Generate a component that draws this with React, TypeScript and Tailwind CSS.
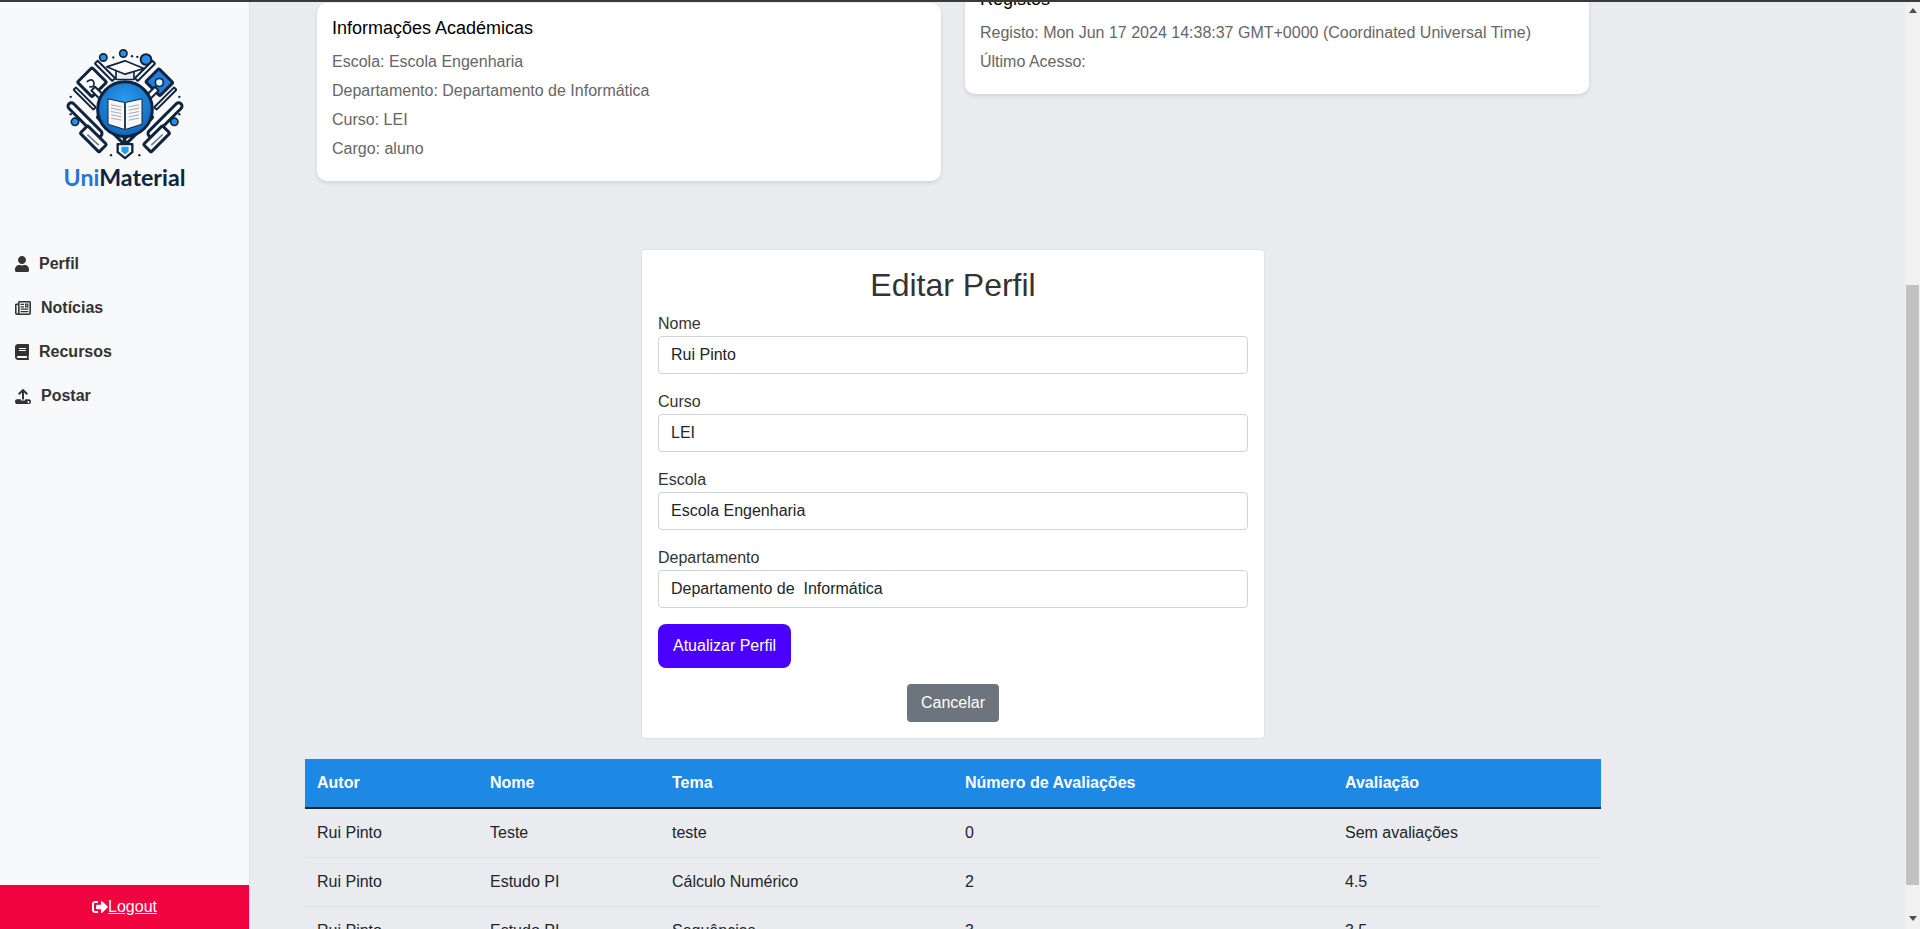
import { FaBook, FaSignOutAlt, FaUser } from "react-icons/fa";
import type { ReactNode } from "react";

const UploadIcon = () => (
  <svg viewBox="0 0 16 16" className="w-4 h-4" fill="currentColor">
    <path d="M8 0.8 L13 5.6 L11.6 7 L9 4.6 V11.5 H7 V4.6 L4.4 7 L3 5.6 Z" />
    <path
      fillRule="evenodd"
      d="M2 11.2 H6 V12.6 H10 V11.2 H14 C15.2 11.2 16 12.2 16 13.4 C16 14.8 15.1 16 14 16 H2 C0.9 16 0 14.8 0 13.4 C0 12.2 0.8 11.2 2 11.2 Z M13.4 12.9 a1 1 0 1 0 0.01 0 Z"
    />
  </svg>
);

const NewspaperIcon = () => (
  <svg viewBox="0 0 16 16" className="w-4 h-4" fill="currentColor">
    <path
      fillRule="evenodd"
      d="M4.5 1 H14.5 C15.4 1 16 1.6 16 2.5 V13 C16 14.1 15.1 15 14 15 H2 C0.9 15 0 14.1 0 13 V5 C0 4.2 0.6 3.5 1.5 3.5 H3 V2.5 C3 1.6 3.6 1 4.5 1 Z M4.6 2.6 V13 C4.6 13.2 4.6 13.3 4.5 13.4 H14 C14.2 13.4 14.4 13.2 14.4 13 V2.6 Z M1.6 5.1 V13 C1.6 13.2 1.8 13.4 2 13.4 C2.2 13.4 3 13.3 3 13 V5.1 Z"
    />
    <path
      fillRule="evenodd"
      d="M10 3.6 H13.4 V7.4 H10 Z M11.2 4.8 V6.2 H12.2 V4.8 Z M5.6 3.8 H9 V5 H5.6 Z M5.6 6.2 H9 V7.4 H5.6 Z M5.6 8.6 H13.4 V9.8 H5.6 Z M5.6 11 H13.4 V12.2 H5.6 Z"
    />
  </svg>
);

const NAV_ITEMS: { label: string; icon: ReactNode }[] = [
  { label: "Perfil", icon: <FaUser className="w-[14px] h-4" /> },
  { label: "Notícias", icon: <NewspaperIcon /> },
  { label: "Recursos", icon: <FaBook className="w-[14px] h-4" /> },
  { label: "Postar", icon: <UploadIcon /> },
];

const FIELDS = [
  { label: "Nome", value: "Rui Pinto" },
  { label: "Curso", value: "LEI" },
  { label: "Escola", value: "Escola Engenharia" },
  { label: "Departamento", value: "Departamento de  Informática" },
];

const ROWS = [
  ["Rui Pinto", "Teste", "teste", "0", "Sem avaliações"],
  ["Rui Pinto", "Estudo PI", "Cálculo Numérico", "2", "4.5"],
  ["Rui Pinto", "Estudo PI", "Sequências", "3", "3.5"],
];

const LogoEmblem = () => (
  <svg viewBox="0 0 450 380" className="w-[150px] h-[127px] blur-[0.4px]">
    <defs>
      <radialGradient id="disc" cx="50%" cy="35%" r="70%">
        <stop offset="0%" stopColor="#2a9cf0" />
        <stop offset="100%" stopColor="#0e62b8" />
      </radialGradient>
    </defs>
    <g stroke="#10243e" strokeWidth="9" fill="#fff" strokeLinejoin="round">
      {/* notebook and blue card */}
      <rect x="95" y="95" width="62" height="62" rx="4" transform="rotate(45 126 126)" />
      <path d="M110 125 Q128 112 132 128 Q134 142 118 140" fill="none" strokeWidth="5" />
      <rect x="298" y="98" width="60" height="56" rx="4" fill="#1e7fe0" transform="rotate(45 328 126)" />
      <circle cx="328" cy="127" r="12" fill="#dff0ff" strokeWidth="5" />
      {/* bars next to the cap */}
      <rect x="128" y="86" width="74" height="12" rx="2" transform="rotate(45 165 92)" strokeWidth="6" />
      <rect x="248" y="86" width="74" height="12" rx="2" transform="rotate(-45 285 92)" strokeWidth="6" />
      {/* pencils */}
      <rect x="62" y="170" width="84" height="10" rx="2" transform="rotate(45 104 175)" strokeWidth="6" />
      <rect x="304" y="170" width="84" height="10" rx="2" transform="rotate(-45 346 175)" strokeWidth="6" />
      <rect x="140" y="138" width="16" height="52" transform="rotate(-45 148 164)" strokeWidth="6" />
      <rect x="294" y="138" width="16" height="52" transform="rotate(45 302 164)" strokeWidth="6" />
      {/* long pens */}
      <rect x="37" y="229" width="136" height="20" rx="10" transform="rotate(45 105 239)" />
      <rect x="277" y="229" width="136" height="20" rx="10" transform="rotate(-45 345 239)" />
      {/* rulers */}
      <rect x="90" y="280" width="80" height="32" rx="3" transform="rotate(45 130 296)" />
      <rect x="280" y="280" width="80" height="32" rx="3" transform="rotate(-45 320 296)" />
      <path d="M112 283 L146 315" fill="none" strokeWidth="5" stroke="#6b7c90" />
      <path d="M338 283 L304 315" fill="none" strokeWidth="5" stroke="#6b7c90" />
      <rect x="130" y="258" width="110" height="14" rx="3" transform="rotate(45 185 265)" />
      <rect x="210" y="258" width="110" height="14" rx="3" transform="rotate(-45 265 265)" />
      {/* disc */}
      <circle cx="225" cy="207" r="82" fill="url(#disc)" strokeWidth="9" />
      {/* cap */}
      <path d="M198 88 V118 H252 V88" fill="#e9edf2" strokeWidth="5" />
      <path d="M170 80 L225 62 L282 85 L225 102 Z" strokeWidth="5" />
      {/* shield */}
      <path d="M203 312 H247 V336 L225 354 L203 336 Z" strokeWidth="7" />
      <path d="M214 320 H236 V334 L225 343 L214 334 Z" fill="#2a9cf0" stroke="none" />
    </g>
    {/* open book */}
    <path d="M174 176 L224 187 V268 L174 252 Z" fill="#f6f7f8" stroke="#10243e" strokeWidth="3" />
    <path d="M276 176 L226 187 V268 L276 252 Z" fill="#f6f7f8" stroke="#10243e" strokeWidth="3" />
    <path
      d="M183 194 L214 200 M183 204 L214 210 M183 214 L214 220 M183 224 L214 230 M183 234 L214 240 M267 194 L236 200 M267 204 L236 210 M267 214 L236 220 M267 224 L236 230 M267 234 L236 240"
      stroke="#a4abb3"
      strokeWidth="3"
    />
    {/* satellites */}
    <g stroke="#10243e" fill="#2a8fe6">
      <circle cx="160" cy="52" r="11" strokeWidth="5" />
      <circle cx="220" cy="40" r="11" strokeWidth="5" />
      <circle cx="288" cy="58" r="16" strokeWidth="6" />
      <circle cx="75" cy="245" r="11" strokeWidth="5" />
      <circle cx="373" cy="245" r="11" strokeWidth="5" />
    </g>
    <g fill="#10243e">
      <circle cx="190" cy="52" r="3.5" />
      <circle cx="246" cy="48" r="3.5" />
      <circle cx="262" cy="50" r="3.5" />
      <circle cx="62" cy="170" r="3.5" />
      <circle cx="388" cy="170" r="3.5" />
      <circle cx="62" cy="222" r="3.5" />
      <circle cx="388" cy="222" r="3.5" />
      <circle cx="183" cy="345" r="3.5" />
      <circle cx="268" cy="345" r="3.5" />
    </g>
  </svg>
);

const InfoCard = ({ title, lines, className }: { title: string; lines: string[]; className?: string }) => (
  <div className={`bg-white rounded-[10px] shadow-[0_2px_4px_rgba(0,0,0,0.1)] p-[15px] ${className ?? ""}`}>
    <h3 className="text-[18px] leading-[21px] text-black mb-[11px]">{title}</h3>
    {lines.map((line) => (
      <p key={line} className="text-[#666] text-base leading-6 mb-[5px]">
        {line}
      </p>
    ))}
  </div>
);

const App = () => {
  return (
    <div className="h-screen overflow-hidden flex flex-col font-['Liberation_Sans',sans-serif] text-[#212529]">
      <div className="h-[2px] bg-[#3a3a3a] shrink-0" />
      <div className="flex-1 flex min-h-0">
        <aside className="w-[250px] shrink-0 flex flex-col bg-[#f8f9fa] border-r border-[#dee2e6]">
          <div className="pt-[38px] flex flex-col items-center">
            <LogoEmblem />
            <div className="font-['Lato',sans-serif] font-bold text-[23.2px] leading-[24px] -mt-[2px] mb-[-1px]">
              <span className="text-[#2a74d8]">Uni</span>
              <span className="text-[#10243e]">Material</span>
            </div>
          </div>
          <nav className="mt-[54px] flex flex-col">
            {NAV_ITEMS.map((item) => (
              <a key={item.label} className="h-[44px] pl-[15px] flex items-center gap-[10px] font-bold text-[#333]">
                {item.icon}
                {item.label}
              </a>
            ))}
          </nav>
          <a className="mt-auto h-[44px] bg-[#f0033f] text-white flex items-center justify-center">
            <FaSignOutAlt size={16} />
            <span className="underline">Logout</span>
          </a>
        </aside>

        <main className="flex-1 min-w-0 overflow-hidden bg-[#e9ebef] pt-px">
          <div className="w-[1296px] ml-[55px]">
            <div className="grid grid-cols-2 gap-6 px-3 items-start">
              <InfoCard
                title="Informações Académicas"
                lines={["Escola: Escola Engenharia", "Departamento: Departamento de Informática", "Curso: LEI", "Cargo: aluno"]}
                className="h-[178px]"
              />
              <InfoCard
                title="Registos"
                lines={["Registo: Mon Jun 17 2024 14:38:37 GMT+0000 (Coordinated Universal Time)", "Último Acesso:"]}
                className="-mt-[29px] h-[120px]"
              />
            </div>

            <form className="w-[624px] h-[490px] mx-auto mt-[68px] bg-white border border-[#dee2e6] rounded p-4">
              <h2 className="text-[32px] leading-[38px] text-[#333] text-center mb-2">Editar Perfil</h2>
              {FIELDS.map((field) => (
                <div key={field.label} className="mb-4">
                  <label className="block text-[#333] leading-6">{field.label}</label>
                  <input
                    defaultValue={field.value}
                    className="block w-full h-[38px] px-3 bg-white border border-[#ced4da] rounded text-[#212529] whitespace-pre"
                  />
                </div>
              ))}
              <button type="button" className="block h-[44px] px-[15px] rounded-lg bg-[#4a00ff] text-white">
                Atualizar Perfil
              </button>
              <button type="button" className="block mx-auto mt-4 h-[38px] px-[13.5px] rounded bg-[#6c757d] text-white">
                Cancelar
              </button>
            </form>

            <table className="w-full table-fixed mt-[20px] border-collapse">
              <thead>
                <tr className="bg-[#1e88e5] text-white border-b-2 border-[#212529]">
                  <th className="w-[173px] h-[49px] px-3 text-left font-bold">Autor</th>
                  <th className="w-[182px] px-3 text-left font-bold">Nome</th>
                  <th className="w-[293px] px-3 text-left font-bold">Tema</th>
                  <th className="w-[380px] px-3 text-left font-bold">Número de Avaliações</th>
                  <th className="px-3 text-left font-bold">Avaliação</th>
                </tr>
              </thead>
              <tbody>
                {ROWS.map((row, i) => (
                  <tr key={i} className="border-b border-[#dee2e6]">
                    {row.map((cell, j) => (
                      <td key={j} className="h-[49px] px-3">
                        {cell}
                      </td>
                    ))}
                  </tr>
                ))}
              </tbody>
            </table>
          </div>
        </main>

        <div className="w-[15px] shrink-0 bg-[#f1f1f1] flex flex-col items-center relative">
          <div className="mt-[6px] w-0 h-0 border-x-[4px] border-x-transparent border-b-[5px] border-b-[#505050]" />
          <div className="mt-[272px] w-[13px] h-[600px] bg-[#c1c1c1]" />
          <div className="mt-[31px] w-0 h-0 border-x-[4px] border-x-transparent border-t-[5px] border-t-[#505050]" />
        </div>
      </div>
    </div>
  );
};

export default App;
